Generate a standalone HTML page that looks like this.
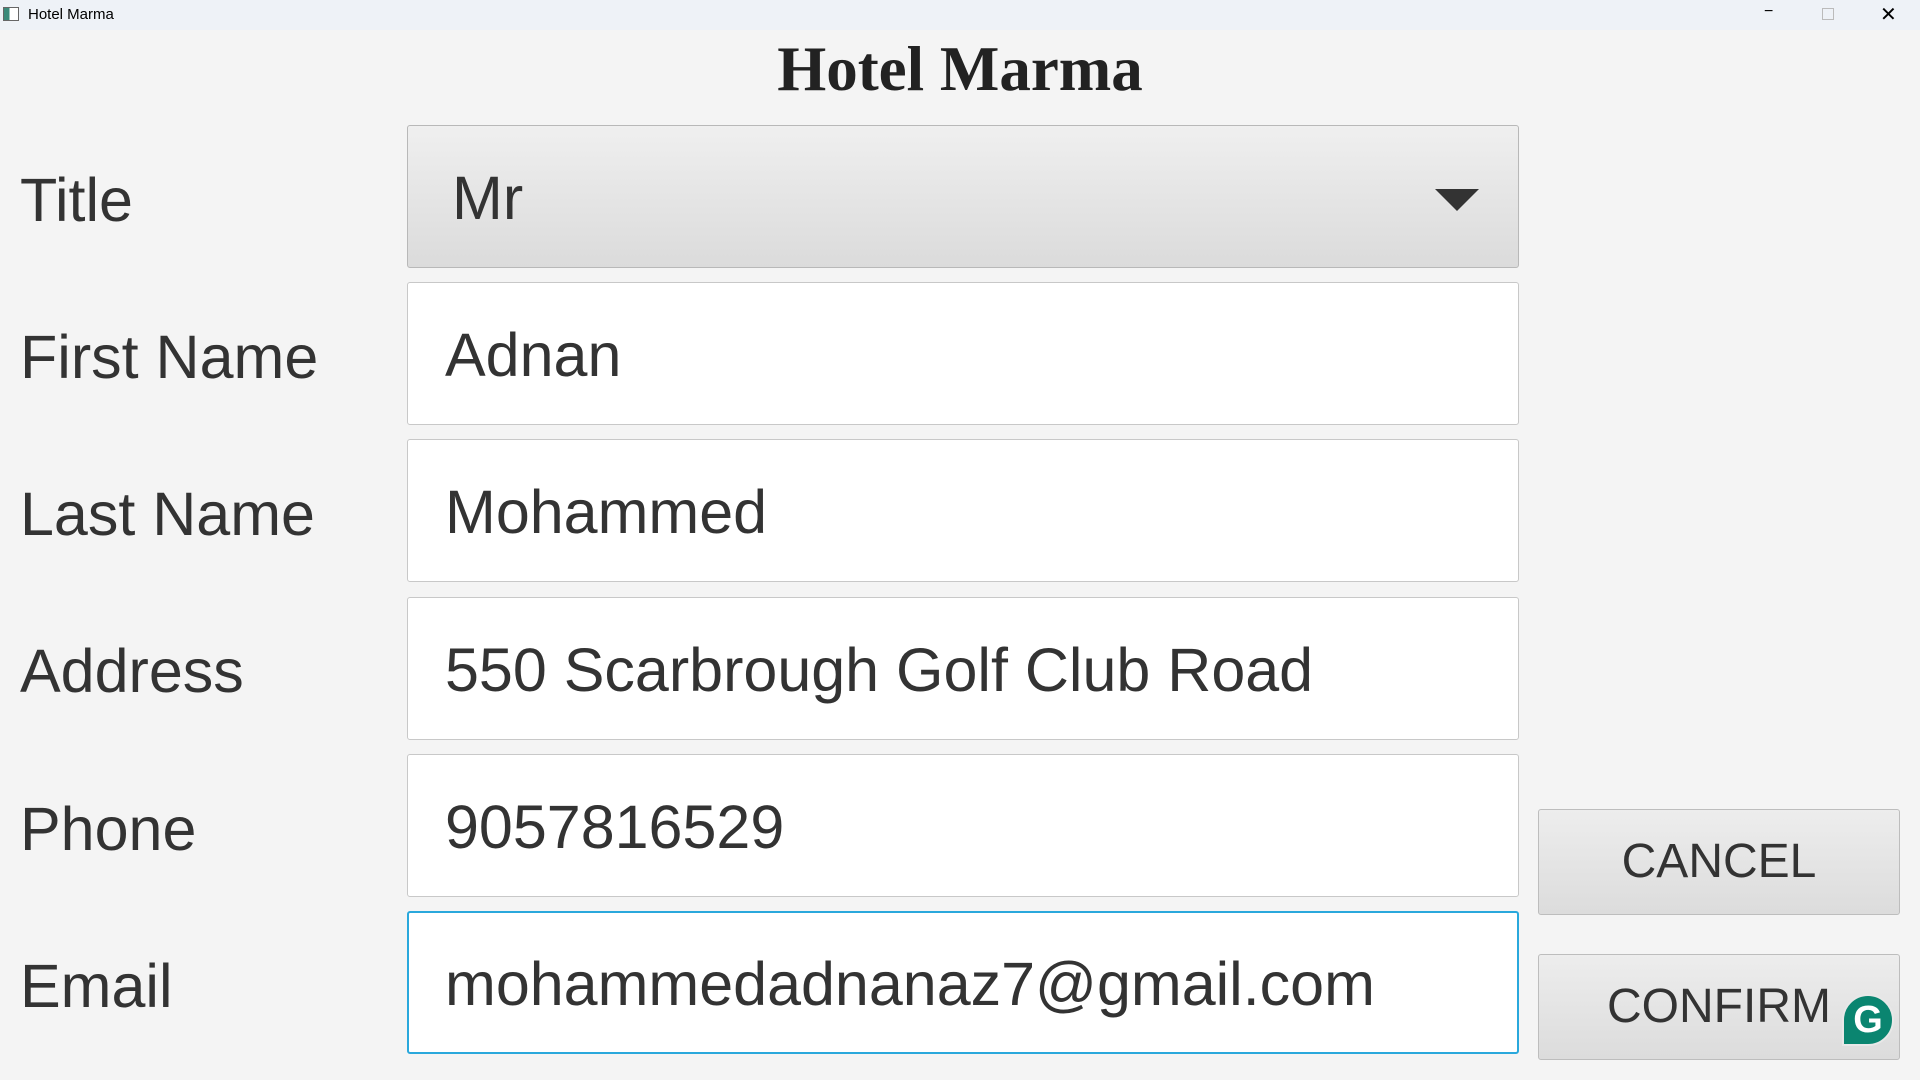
<!DOCTYPE html>
<html><head><style>
body{margin:0;width:1920px;height:1080px;background:#f4f4f4;font-family:"Liberation Sans",sans-serif;position:relative;overflow:hidden;color:#333}
.tb{position:absolute;left:0;top:0;width:1920px;height:30px;background:#eef2f7;font-size:15px;color:#000}
.h{position:absolute;left:0;width:1920px;top:31px;text-align:center;font-family:"Liberation Serif",serif;font-weight:bold;font-size:63px;line-height:76px;color:#222}
.lbl{position:absolute;left:20px;font-size:61px;line-height:60px}
.f{position:absolute;left:407px;width:1112px;height:143px;box-sizing:border-box;background:#fff;border:1px solid #c8c8c8;border-radius:3px;font-size:61px;line-height:144px;padding-left:37px;white-space:nowrap}
.cb{background:linear-gradient(#efefef,#dbdbdb);border-color:#b8b8b8}
.btn{position:absolute;left:1538px;width:362px;height:106px;box-sizing:border-box;border:1px solid #bdbdbd;border-radius:3px;background:linear-gradient(#ededed,#dcdcdc);font-size:48px;line-height:104px;text-align:center}
</style></head><body>
<div class="tb"><span style="position:absolute;left:3px;top:7px;width:16px;height:14px;border:1px solid #666;background:linear-gradient(90deg,#3a8a7a 40%,#fff 40%);box-sizing:border-box"></span><span style="position:absolute;left:28px;top:6px">Hotel Marma</span>
<span style="position:absolute;left:1764px;top:3px;font-size:16px">−</span>
<span style="position:absolute;left:1822px;top:8px;width:10px;height:10px;border:1px solid #bbb"></span>
<span style="position:absolute;left:1880px;top:2px;font-size:20px">✕</span></div>
<div class="h">Hotel Marma</div>
<div class="lbl" style="top:170px">Title</div>
<div class="lbl" style="top:327px">First Name</div>
<div class="lbl" style="top:484px">Last Name</div>
<div class="lbl" style="top:641px">Address</div>
<div class="lbl" style="top:799px">Phone</div>
<div class="lbl" style="top:956px">Email</div>
<div class="f cb" style="top:125px;padding-left:44px">Mr<svg style="position:absolute;left:1027px;top:63px" width="44" height="22"><polygon points="0,0 44,0 22,22" fill="#333"/></svg></div>
<div class="f" style="top:282px">Adnan</div>
<div class="f" style="top:439px">Mohammed</div>
<div class="f" style="top:597px">550 Scarbrough Golf Club Road</div>
<div class="f" style="top:754px">9057816529</div>
<div class="f" style="top:911px;border:2px solid #2aa8dc;line-height:142px;padding-left:36px">mohammedadnanaz7@gmail.com</div>
<div class="btn" style="top:809px">CANCEL</div>
<div class="btn" style="top:954px">CONFIRM</div>
<div style="position:absolute;left:1842px;top:994px;width:48px;height:48px;border-radius:50% 50% 50% 0;background:#0a8570;border:2px solid #e8e8e8;color:#fff;font-size:38px;font-weight:bold;line-height:48px;text-align:center">G</div>
</body></html>
